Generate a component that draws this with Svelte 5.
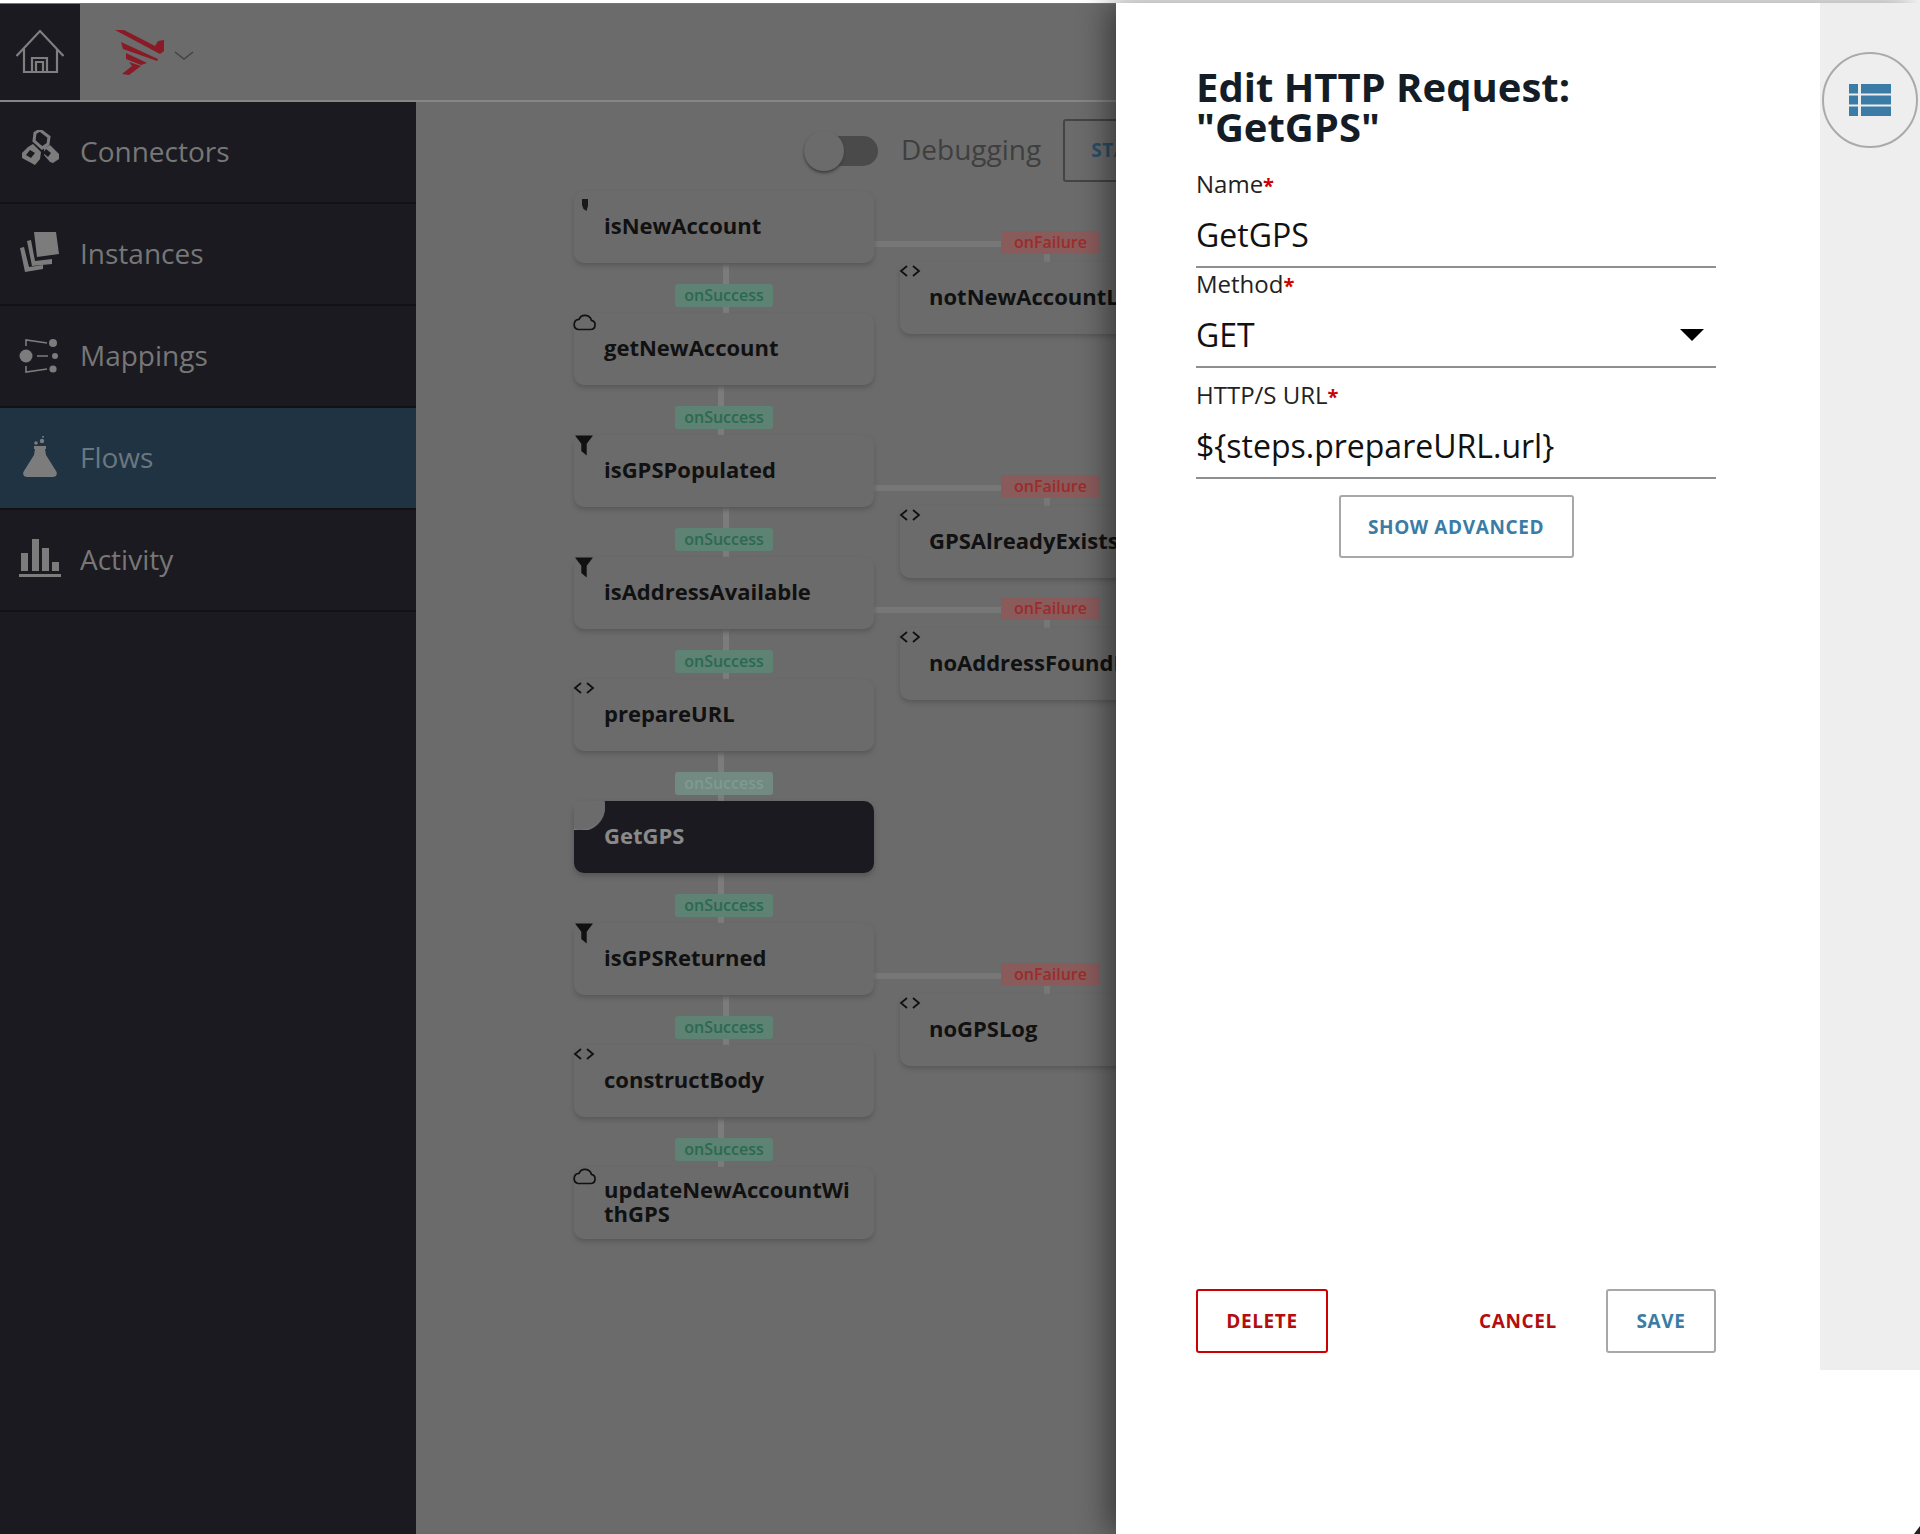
<script>
  const Row = 122;
  const Success = [
    { x: 726, i: 0 }, { x: 721, i: 1 }, { x: 726, i: 2 }, { x: 726, i: 3 },
    { x: 721, i: 4 }, { x: 721, i: 5 }, { x: 726, i: 6 }, { x: 721, i: 7 }
  ];
  const steps = [
    { name: 'isNewAccount', icon: 'sliver' },
    { name: 'getNewAccount', icon: 'cloud' },
    { name: 'isGPSPopulated', icon: 'filter' },
    { name: 'isAddressAvailable', icon: 'filter' },
    { name: 'prepareURL', icon: 'code' },
    { name: 'GetGPS', icon: 'active', active: true },
    { name: 'isGPSReturned', icon: 'filter' },
    { name: 'constructBody', icon: 'code' },
    { name: 'updateNewAccountWithGPS', icon: 'cloud' }
  ];
  const branches = [
    { i: 0, name: 'notNewAccountLog' },
    { i: 2, name: 'GPSAlreadyExistsLog' },
    { i: 3, name: 'noAddressFoundLog' },
    { i: 6, name: 'noGPSLog' }
  ];
  const top = (i) => 89 + i * Row;
  const nav = [
    { label: 'Connectors', icon: 'connectors' },
    { label: 'Instances', icon: 'instances' },
    { label: 'Mappings', icon: 'mappings' },
    { label: 'Flows', icon: 'flows', active: true },
    { label: 'Activity', icon: 'activity' }
  ];
</script>

{#snippet stepIcon(kind)}
  {#if kind === 'code'}
    <svg class="ico code" viewBox="0 0 22 14"><path d="M8 2 2 7l6 5M14 2l6 5-6 5" fill="none" stroke="#111" stroke-width="1.8"/></svg>
  {:else if kind === 'cloud'}
    <svg class="ico cloud" viewBox="0 0 26 18"><path d="M7 16.5h12.5a4.6 4.6 0 0 0 .9-9.1A6.6 6.6 0 0 0 8 6.3 5.2 5.2 0 0 0 7 16.5Z" fill="none" stroke="#111" stroke-width="1.7"/></svg>
  {:else if kind === 'filter'}
    <svg class="ico filter" viewBox="0 0 20 22"><path d="M0 0h20l-7 9v13l-6-5V9Z" fill="#111"/></svg>
  {:else if kind === 'sliver'}
    <svg class="ico sliver" viewBox="0 0 6 12"><path d="M0 0h6v7l-1.500 5L1.500 10 0 6Z" fill="#1a1a1a"/></svg>
  {:else if kind === 'active'}
    <span class="ico disc"></span>
  {/if}
{/snippet}

{#snippet navIcon(kind)}
  {#if kind === 'connectors'}
    <svg class="nav-ico" viewBox="0 0 42 42" fill="#7c7c7c">
      <path d="M16 3 21 0l9 7-1 7-6 4-8-7Z" fill="none" stroke="#7c7c7c" stroke-width="3"/>
      <path d="M9 17l5-3 8 8-1 7-5 6-13-7 0-5Z"/>
      <path d="M25 18l6-3 9 9v5l-6 4-3-1-6-7Z"/>
      <path d="M11 20l5 3-4 5-5-3ZM27 19l5 4-3 4-5-4Z" fill="#1b1a20"/>
    </svg>
  {:else if kind === 'instances'}
    <svg class="nav-ico" viewBox="0 0 42 42" fill="#7c7c7c">
      <path d="M15 0h22l3 22-22 3Z"/><path d="M8 9l4-1 4 21 17-2v5l-20 2Z" /><path d="M1 16l4-1 5 20 14-2v4l-18 3Z"/>
    </svg>
  {:else if kind === 'mappings'}
    <svg class="nav-ico" viewBox="0 0 42 42" fill="#7c7c7c">
      <circle cx="7" cy="22" r="6.500"/><circle cx="34" cy="9" r="4"/><circle cx="36" cy="22" r="3"/><circle cx="34" cy="35" r="3.600"/>
      <path d="M7 12V6l21 3M7 32v6l21-3M18 22h11" fill="none" stroke="#7c7c7c" stroke-width="1.600"/>
    </svg>
  {:else if kind === 'flows'}
    <svg class="nav-ico" viewBox="0 0 42 42" fill="#7c7c7c">
      <path d="M15 10h12v3h-1l1 6 10 16c2 3 0 6-3 6H8c-3 0-5-3-3-6l10-16 1-6h-1Z"/>
      <circle cx="17" cy="7" r="1.800"/><circle cx="23" cy="5" r="2.200"/><circle cx="24" cy="0.800" r="1"/>
    </svg>
  {:else}
    <svg class="nav-ico" viewBox="0 0 42 42" fill="#7c7c7c">
      <path d="M2 15h7v18H2ZM13 1h7v32h-7ZM23 10h7v23h-7ZM33 24h7v9h-7ZM0 36h42v3H0Z"/>
    </svg>
  {/if}
{/snippet}

<div class="page">
  <header class="topbar">
    <div class="home">
      <svg viewBox="0 0 50 46" fill="none" stroke="#7f7f7f" stroke-width="2.200">
        <path d="M1.500 27 25 2l23.500 25M9 20v23h33V20M17 43V29h15v14M21 43V33h7v10"/>
      </svg>
    </div>
    <div class="logo">
      <svg class="bird" viewBox="0 0 50 47" fill="#8a1a26">
        <path d="M0 1h9l31 16 3-5 6-1v11l-4 3ZM6 13l37 17-1 2-34-12ZM11 24l21 10-6 2-15-6ZM14 33l12 4-12 9-7-1 10-8Z"/>
      </svg>
      <svg class="caret" viewBox="0 0 20 9"><path d="M1 1l9 7 9-7" fill="none" stroke="#444" stroke-width="1.500"/></svg>
    </div>
  </header>

  <div class="body">
    <nav class="sidebar">
      {#each nav as item}
        <div class="nav-item" class:active={item.active}>
          <span class="nav-icon-box">{@render navIcon(item.icon)}</span>
          <span>{item.label}</span>
        </div>
      {/each}
    </nav>

    <main class="canvas">
      <div class="toolbar">
        <span class="toggle"><span class="thumb"></span></span>
        <span class="debug">Debugging</span>
        <span class="start">START</span>
      </div>

      {#each Success as s}
        <div class="vbar" style="left:{s.x - 419}px;top:{top(s.i) + 72}px"></div>
        <div class="badge ok" class:faded={s.i === 4} style="top:{top(s.i) + 93}px">onSuccess</div>
      {/each}

      {#each branches as b}
        <div class="hbar" style="top:{top(b.i) + 50}px"></div>
        <div class="stub" style="top:{top(b.i) + 63}px"></div>
        <div class="badge bad" style="top:{top(b.i) + 40}px">onFailure</div>
        <div class="node side" style="top:{top(b.i) + 71}px">
          {@render stepIcon('code')}
          <div class="node-label">{b.name}</div>
        </div>
      {/each}

      {#each steps as s, i}
        <div class="node" class:active={s.active} style="top:{top(i)}px">
          {@render stepIcon(s.icon)}
          <div class="node-label">{s.name}</div>
        </div>
      {/each}
    </main>
  </div>

  <aside class="panel">
    <form class="form" onsubmit={(e) => e.preventDefault()}>
      <h1>Edit HTTP Request:<br />"GetGPS"</h1>
      <div class="field name">
        <div class="label">Name<b>*</b></div>
        <div class="value">GetGPS</div>
      </div>
      <div class="field">
        <div class="label">Method<b>*</b></div>
        <div class="value">GET<svg class="arrow" viewBox="0 0 24 12"><path d="M0 0h24L12 12Z" fill="#000"/></svg></div>
      </div>
      <div class="field url">
        <div class="label">HTTP/S URL<b>*</b></div>
        <div class="value">{'${steps.prepareURL.url}'}</div>
      </div>
      <div class="adv-row"><button class="btn adv" type="button">SHOW ADVANCED</button></div>
      <div class="actions">
        <button class="btn del" type="button">DELETE</button>
        <span class="spacer"></span>
        <button class="btn cancel" type="button">CANCEL</button>
        <button class="btn save" type="button">SAVE</button>
      </div>
    </form>
    <div class="rail">
      <div class="rail-btn">
        <svg viewBox="0 0 42 32" fill="#3a7ca5"><path d="M0 0h9v9.500H0ZM12 0h30v9.500H12ZM0 11.500h9v9H0ZM12 11.500h30v9H12ZM0 22.500h9V32H0ZM12 22.500h30V32H12Z"/></svg>
      </div>
    </div>
  </aside>
  <svg class="corner" viewBox="0 0 6 8"><path d="M6 0v8H0Z" fill="#222"/></svg>
</div>

<style>
  :global(body) { margin: 0; background: #fff; font-family: "Open Sans", "Noto Sans", sans-serif; }
  .page { position: relative; width: 1920px; height: 1534px; overflow: hidden; padding-top: 3px; box-sizing: border-box; display: flex; flex-direction: column; }
  .topbar { height: 99px; flex: none; box-sizing: border-box; background: #6b6b6b; border-bottom: 2px solid #868686; border-top: 1px solid #777; display: flex; }
  .home { width: 80px; background: #1b1a20; display: flex; align-items: center; justify-content: center; }
  .home svg { width: 50px; height: 46px; margin-top: -1px; }
  .logo { display: flex; align-items: center; padding-left: 35px; }
  .bird { width: 50px; height: 47px; }
  .caret { width: 20px; height: 9px; margin: 6px 0 0 9px; }
  .body { flex: 1; display: flex; min-height: 0; }
  .sidebar { width: 416px; flex: none; background: #1b1a20; }
  .nav-item { height: 100px; box-sizing: content-box; border-bottom: 2px solid #111116; display: flex; align-items: center; color: #777; font-size: 28px; }
  .nav-item > span { margin-bottom: 2px; }
  .nav-item.active { background: #1f3343; color: #6b7780; }
  .nav-icon-box { width: 80px; display: flex; justify-content: center; }
  .nav-ico { width: 42px; height: 42px; }
  .canvas { flex: 1; position: relative; background: #6b6b6b; }
  .toolbar { position: absolute; left: 388px; top: 13px; height: 70px; display: flex; align-items: center; }
  .toggle { position: relative; width: 74px; height: 30px; background: #4a4a4a; border-radius: 15px; margin-top: 1px; }
  .thumb { position: absolute; left: 0; top: -5px; width: 40px; height: 40px; border-radius: 50%; background: #6b6b6b; box-shadow: 0 2px 3px #3d3d3d; }
  .debug { font-size: 28px; color: #3f3f3f; margin-left: 23px; margin-top: -2px; }
  .start { margin-left: 22px; height: 63px; width: 300px; box-sizing: border-box; border: 2px solid #444; border-radius: 3px; padding-left: 26px; line-height: 59px; color: #294f66; font-weight: 700; font-size: 19px; letter-spacing: .5px; }
  .vbar { position: absolute; width: 6px; height: 50px; background: #7c7c7c; }
  .hbar { position: absolute; left: 458px; width: 127px; height: 6px; background: #777; }
  .stub { position: absolute; left: 628px; width: 6px; height: 8px; background: #777; }
  .badge { position: absolute; height: 23px; border-radius: 3px; box-sizing: border-box; text-align: center; font-size: 16px; line-height: 23px; font-weight: 600; }
  .badge.ok { left: 259px; width: 98px; background: #5e8274; color: #2a6a50; }
  .badge.ok.faded { background: #728a82; color: #7f9a90; }
  .badge.bad { left: 585px; width: 99px; background: #8a5b5b; color: #9c2b2b; }
  .node { position: absolute; left: 158px; width: 300px; height: 72px; box-sizing: border-box; background: #6b6b6b; border-radius: 10px; box-shadow: 0 3px 4px #5a5a5a; padding: 0 14px 4px 30px; color: #111; display: flex; align-items: center; }
  .node.side { left: 484px; padding-left: 29px; }
  .node.active { background: #1b1a20; color: #8a8a8a; box-shadow: 0 3px 5px #555; }
  .node-label { font-size: 22px; font-weight: 700; line-height: 24.500px; word-break: break-all; width: 252px; }
  .node.side .node-label { white-space: nowrap; }
  .ico { position: absolute; }
  .code { left: -1px; top: 2px; width: 22px; height: 14px; }
  .cloud { left: -3px; top: 0; width: 26px; height: 18px; }
  .filter { left: 1px; top: 0; width: 18px; height: 21px; }
  .sliver { left: 8px; top: 8px; width: 6px; height: 12px; }
  .disc { left: -17px; top: -19px; width: 48px; height: 48px; border-radius: 50%; background: #6b6b6b; box-shadow: 0 1px 1px #8a8a8a; clip-path: inset(19px 0 0 17px); }
  .panel { position: absolute; left: 1116px; top: 3px; right: 0; bottom: 0; z-index: 2; background: #fff; box-shadow: -8px 0 28px rgba(0,0,0,.45); display: flex; align-items: flex-start; }
  .form { width: 704px; height: 1367px; box-sizing: border-box; padding: 64px 104px 0 80px; display: flex; flex-direction: column; flex: none; }
  h1 { margin: 0 0 22px; font-size: 40px; line-height: 40px; font-weight: 700; color: #141d26; }
  .field { display: flex; flex-direction: column; }
  .label { font-size: 24px; line-height: 30px; color: #222; }
  .label b { color: #c00; font-weight: 700; font-size: 20px; }
  .value { position: relative; height: 67px; box-sizing: border-box; border-bottom: 2px solid #8f8f8f; font-size: 32px; line-height: 68px; color: #111; }
  .name { margin-bottom: 1px; }
  .url { margin-top: 12px; }
  .arrow { position: absolute; right: 12px; top: 28px; width: 24px; height: 12px; }
  .adv-row { display: flex; justify-content: center; margin-top: 16px; }
  .btn { font-family: inherit; font-weight: 700; font-size: 19px; letter-spacing: .6px; background: #fff; border: 2px solid #a8a8a8; border-radius: 3px; height: 64px; padding: 0; }
  .adv { width: 235px; height: 63px; color: #3a7ca5; }
  .actions { margin-top: auto; display: flex; align-items: center; margin-bottom: 17px; }
  .del { width: 132px; border-color: #c00; color: #b40d0d; }
  .spacer { flex: 1; }
  .cancel { border: 0; background: none; color: #b40d0d; width: 77px; }
  .save { width: 110px; margin-left: 50px; color: #3a7ca5; }
  .rail { flex: 1; height: 1367px; background: #eee; padding-top: 49px; box-sizing: border-box; display: flex; justify-content: center; }
  .rail-btn { width: 96px; height: 96px; box-sizing: border-box; border: 2px solid #aaa; border-radius: 50%; display: flex; align-items: center; justify-content: center; }
  .rail-btn svg { width: 42px; height: 32px; }
  .corner { position: absolute; right: 0; bottom: 0; z-index: 3; width: 6px; height: 8px; }
</style>
